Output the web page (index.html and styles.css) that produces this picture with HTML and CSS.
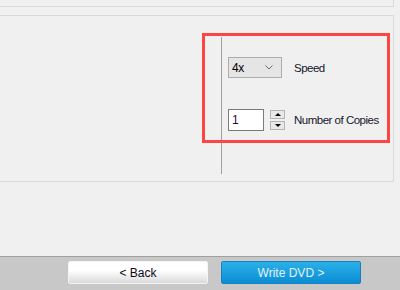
FILE: index.html
```html
<!DOCTYPE html>
<html lang="en">
<head>
    <meta charset="UTF-8">
    <title>Write DVD</title>
    <link rel="stylesheet" href="styles.css">
</head>
<body>
    <div class="top-panel"></div>

    <div class="main-panel">
        <div class="options">
            <div class="row">
                <div class="select">
                    <span>4x</span>
                    <svg width="8" height="5" viewBox="0 0 8 5"><path d="M0.5 0.5 L4 4 L7.5 0.5" fill="none" stroke="#6a6a6a" stroke-width="1"/></svg>
                </div>
                <label class="label-speed">Speed</label>
            </div>
            <div class="row">
                <div class="number-input">1</div>
                <div class="spinner">
                    <div class="spin-btn"><span class="arrow-up"></span></div>
                    <div class="spin-btn"><span class="arrow-down"></span></div>
                </div>
                <label class="label-copies">Number of Copies</label>
            </div>
        </div>
        <!-- cadre rouge d'annotation -->
        <div class="highlight"></div>
    </div>

    <div class="footer">
        <button class="btn btn-back">&lt; Back</button>
        <button class="btn btn-write">Write DVD &gt;</button>
    </div>
</body>
</html>
```

FILE: styles.css
```css
body {
    margin: 0;
    width: 400px;
    height: 290px;
    overflow: hidden;
    background: #f0f0f0;
    font-family: 'Liberation Sans', Arial, sans-serif;
    font-size: 11.5px;
    letter-spacing: -0.5px;
    color: #14142a;
    display: flex;
    flex-direction: column;
}

.top-panel {
    width: 393px;
    height: 6px;
    border-right: 1px solid #d9d9d9;
    border-bottom: 1px solid #d9d9d9;
}

.main-panel {
    position: relative;
    margin-top: 8px;
    width: 393px;
    height: 165px;
    border-top: 1px solid #d9d9d9;
    border-right: 1px solid #d9d9d9;
    border-bottom: 1px solid #d9d9d9;
    display: flex;
    justify-content: flex-end;
}

.options {
    margin-top: 21px;
    width: 165px;
    height: 117px;
    border-left: 1px solid #a0a0a0;
    padding: 20px 0 0 6px;
    display: flex;
    flex-direction: column;
    gap: 31px;
}

.row {
    display: flex;
    align-items: center;
    white-space: nowrap;
}

.select {
    box-sizing: border-box;
    width: 54px;
    height: 21px;
    background: #e5e5e5;
    border: 1px solid #adadad;
    display: flex;
    align-items: center;
    justify-content: space-between;
    padding: 0 8px 0 3px;
    font-size: 12px;
    color: #000;
}

.label-speed {
    margin-left: 12px;
}

.number-input {
    box-sizing: border-box;
    width: 36px;
    height: 22px;
    background: #fff;
    border: 1px solid #7a7a7a;
    padding: 3px 0 0 3px;
    font-size: 12px;
    color: #2a0a3a;
}

.spinner {
    margin-left: 6px;
    display: flex;
    flex-direction: column;
    gap: 2px;
}

.spin-btn {
    box-sizing: border-box;
    width: 15px;
    height: 9px;
    background: #e8e8e8;
    border: 1px solid #b4b4b4;
    display: flex;
    align-items: center;
    justify-content: center;
}

.arrow-up {
    border-left: 3px solid transparent;
    border-right: 3px solid transparent;
    border-bottom: 3px solid #000;
}

.arrow-down {
    border-left: 3px solid transparent;
    border-right: 3px solid transparent;
    border-top: 3px solid #000;
}

.label-copies {
    margin-left: 9px;
}

.highlight {
    position: absolute;
    left: 202px;
    top: 17px;
    width: 182px;
    height: 104px;
    border: 3px solid #ff4444;
    pointer-events: none;
}

.footer {
    margin-top: auto;
    height: 34px;
    border-top: 1px solid #a0a0a0;
    background: #c8c8c8;
    display: flex;
    justify-content: flex-end;
    align-items: flex-start;
    gap: 13px;
    padding: 4px 39px 0 0;
    box-sizing: border-box;
}

.btn {
    width: 140px;
    height: 23px;
    border-radius: 2px;
    font-family: 'Liberation Sans', Arial, sans-serif;
    font-size: 12px;
    padding: 0;
}

.btn-back {
    background: linear-gradient(to bottom, #ffffff 40%, #dadada);
    border: 1px solid #f4f4f4;
    color: #0a0a1a;
}

.btn-write {
    background: linear-gradient(to bottom, #2cb0e8, #0a8ed4);
    border: 1px solid #1a7fc0;
    color: #e4f2fb;
}
```
